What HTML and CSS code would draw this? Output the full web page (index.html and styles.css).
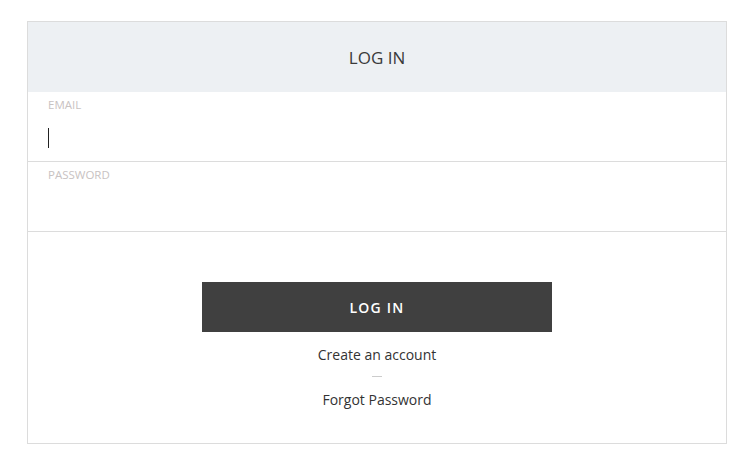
FILE: index.html
```html
<!DOCTYPE html>
<html lang="en">
<head>
    <meta charset="UTF-8">
    <meta name="viewport" content="width=device-width, initial-scale=1.0">
    <title>Log In</title>
    <link rel="stylesheet" href="styles.css">
</head>
<body>
    <div id="loginBox">
        <div class="box-header">LOG IN</div>
        <label class="field">
            <span class="field-label">EMAIL</span>
            <span class="field-input"><span class="caret"></span></span>
        </label>
        <label class="field">
            <span class="field-label">PASSWORD</span>
            <span class="field-input"></span>
        </label>
        <div class="box-footer">
            <button id="loginButton">LOG IN</button>
            <a class="link" href="#">Create an account</a>
            <span class="separator"></span>
            <a class="link" href="#">Forgot Password</a>
        </div>
    </div>
</body>
</html>
```
FILE: styles.css
```css
body {
    margin: 0;
    padding: 21px 29px 0 27px;
    background-color: #fff;
    font-family: "Open Sans", Lato, sans-serif;
    color: #333;
}
#loginBox {
    width: 698px;
    border: 1px solid #dcdcdc;
}
.box-header {
    height: 70px;
    background-color: #edf0f3;
    display: flex;
    align-items: center;
    justify-content: center;
    font-size: 17px;
    color: #3a3a3a;
}
.field {
    display: flex;
    flex-direction: column;
    height: 69px;
    padding: 0 20px;
    border-bottom: 1px solid #dcdcdc;
}
.field-label {
    font-size: 11.5px;
    color: #c8c2c2;
    margin-top: 7px;
    line-height: 12px;
}
.field-input {
    height: 20px;
    margin-top: 17px;
}
.caret {
    display: block;
    width: 1px;
    height: 20px;
    background-color: #222;
}
.box-footer {
    display: flex;
    flex-direction: column;
    align-items: center;
    padding: 50px 0 34px;
}
#loginButton {
    width: 350px;
    height: 50px;
    border: none;
    background-color: #404040;
    color: #fff;
    font-family: inherit;
    font-size: 14px;
    font-weight: 600;
    letter-spacing: 1.2px;
    cursor: pointer;
    margin-bottom: 13px;
}
.link {
    font-size: 14px;
    color: #333;
    text-decoration: none;
    line-height: 19px;
}
.separator {
    width: 10px;
    height: 1px;
    background-color: #ccc;
    margin: 12px 0 13px;
}
```
